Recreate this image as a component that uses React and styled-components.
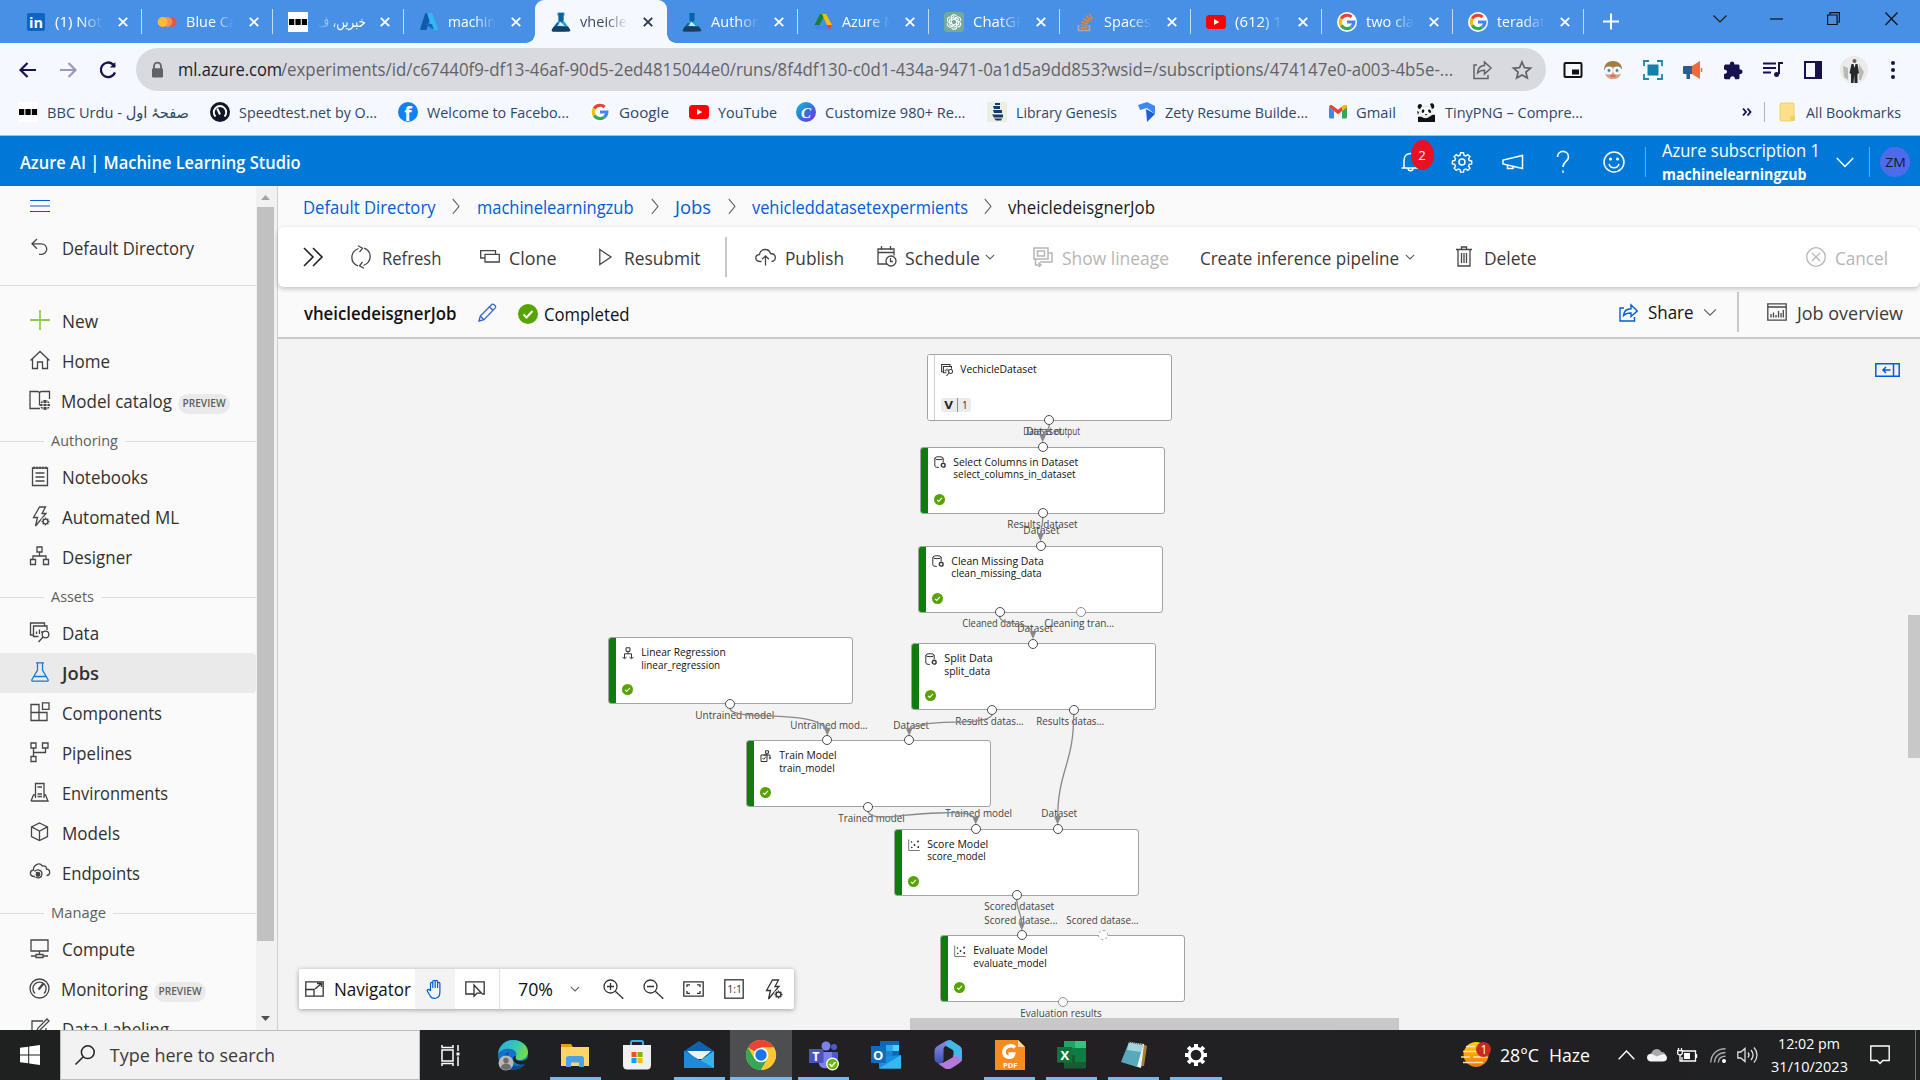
import React, { useLayoutEffect, useRef, useState } from "react";
import styled, { createGlobalStyle, css } from "styled-components";

const GlobalStyle = createGlobalStyle`
  * { box-sizing: border-box; }
  html, body { margin: 0; padding: 0; overflow: hidden; }
  body {
    font-family: "Open Sans", "Noto Sans", "DejaVu Sans", sans-serif;
    color: #323130;
    background: #f3f3f3;
  }
  svg { display: block; flex: none; overflow: visible; }
`;

/* ---------- text that keeps to a known width ---------- */
const TextBox = styled.span`
  display: inline-block;
  flex: none;
  white-space: nowrap;
  font-size: ${(p) => p.$size}px;
  font-weight: ${(p) => p.$weight || 400};
  line-height: ${(p) => p.$lh || Math.round(p.$size * 1.36)}px;
  color: ${(p) => p.$color || "inherit"};
  margin-left: ${(p) => p.$ml || 0}px;
  ${(p) => p.$dy && css`position: relative; top: ${p.$dy}px;`}
`;
const TextInner = styled.span`
  display: inline-block;
  transform-origin: 0 50%;
  text-indent: 0;
`;

function Text({ w, size = 17.5, weight, color, ml, dy, lh, children }) {
  const ref = useRef(null);
  const [scale, setScale] = useState(1);
  const bearing = size * 0.06;
  useLayoutEffect(() => {
    const el = ref.current;
    el.style.transform = "none";
    const natural = el.getBoundingClientRect().width;
    const next = natural ? (w + bearing * 2) / natural : 1;
    el.style.transform = `translateX(${-bearing}px) scaleX(${next})`;
    setScale(next);
  }, [w, children, bearing]);
  return (
    <TextBox $size={size} $weight={weight} $color={color} $ml={ml} $dy={dy} $lh={lh} style={{ width: w }}>
      <TextInner ref={ref} style={{ transform: `translateX(${-bearing}px) scaleX(${scale})` }}>{children}</TextInner>
    </TextBox>
  );
}

const IconSlot = styled.span`
  display: flex;
  flex: none;
  align-items: center;
  justify-content: center;
  width: ${(p) => p.$w}px;
  height: ${(p) => p.$h || p.$w}px;
  margin-left: ${(p) => p.$ml || 0}px;
`;

function Icon({ w = 20, h, ml, vb, color = "#484644", sw = 1.3, fill = "none", children }) {
  const hh = h || w;
  return (
    <IconSlot $w={w} $h={hh} $ml={ml}>
      <svg width={w} height={hh} viewBox={vb || `0 0 ${w} ${hh}`} fill={fill} stroke={color} strokeWidth={sw} preserveAspectRatio="none">
        {children}
      </svg>
    </IconSlot>
  );
}

/* ---------- brand marks ---------- */
const G = (
  <g fill="none" strokeWidth="3.2">
    <path stroke="#ea4335" d="M4.2 6.6A6.8 6.8 0 0 1 14.6 5" />
    <path stroke="#fbbc05" d="M4.2 13.4a6.8 6.8 0 0 1 0-6.8" />
    <path stroke="#34a853" d="M14.2 15.2A6.8 6.8 0 0 1 4.2 13.4" />
    <path stroke="#4285f4" d="M10 10h6.9a6.8 6.8 0 0 1-2.7 5.2" />
  </g>
);
const marks = {
  linkedin: (<><rect width="18" height="18" x="1" y="1" rx="2" fill="#0a66c2" /><text x="3" y="16" fontSize="14.5" fontWeight="700" fill="#fff">in</text></>),
  monday: (<><circle cx="14.6" cy="10" r="5" fill="#e8554d" /><circle cx="10.3" cy="10" r="5" fill="#f58f55" /><circle cx="5.7" cy="10" r="5" fill="#fdb93a" /></>),
  bbc: (<><rect width="20" height="20" fill="#fff" /><path fill="#000" d="M1 7h5.3v6H1zM7.4 7h5.3v6H7.4zM13.8 7h5.3v6h-5.3z" /></>),
  azure: (<><path fill="#0f5ba8" d="M7 1h6L7.500 18H2.200a1 1 0 0 1-1-1.300L6 2z" /><path fill="#35b8f1" d="M12.500 1H8l5.500 17h4.200a1 1 0 0 0 1-1.300L13.600 2z" /><path fill="#0a6cc9" d="M6 12h7l2 6z" /></>),
  flask: (<><path fill="#1fa2d8" d="M6.500 .5h7v3h-1v5L19 17.500c.7 1.300-.2 2-1.200 2H2.200c-1 0-1.900-.7-1.200-2L7.500 8.500v-5h-1z" /><path fill="#0c61a6" d="M7.500 1h5v7l-2 3-3-2.500zM1 17.500l5-7 4 3 4.500 6H2.200c-1 0-1.900-.7-1.200-2z" /><path fill="#173f63" d="M3 14.500h14l2 3c.7 1.300-.2 2-1.200 2H2.200c-1 0-1.900-.7-1.200-2z" /><path fill="#f5f8fe" d="M9.500 9.500L6.300 14h7.200z" opacity=".85" /></>),
  ads: (<><path fill="#188038" d="M7 2h5L6 14 1.500 13z" /><path fill="#fbbc04" d="M9 2h4l6 11h-5z" /><path fill="#4285f4" d="M1.500 13h5L9 18H3.500z" /><path fill="#4285f4" d="M6.500 13H14l2.500 5H3.500z" opacity=".75" /><path fill="#ea4335" d="M14 13h5l-2.500 5z" /></>),
  gpt: (<><rect width="20" height="20" rx="3.500" fill="#75a99b" /><g fill="none" stroke="#fff" strokeWidth="1.100">{[0, 60, 120, 180, 240, 300].map((a) => <path key={a} transform={`rotate(${a} 10 10)`} d="M7 8.300V5.600a3 3 0 0 1 5.300-1.800M7.400 8.400l4.500-2.600 3 1.700" />)}</g></>),
  stack: (<g fill="none" strokeWidth="1.700"><path stroke="#a9a9a9" d="M3.500 13v5.500h11V13" /><path stroke="#f48024" d="M5.500 15.800h7M5.700 13l7 .8M6.500 9.800l6.600 1.900M8.200 6.500l6 3.400M11 3.500l4.600 5M14.500 1.500l2.600 6" /></g>),
  yt: (<><rect y="3" width="20" height="14" rx="3.500" fill="#f00" /><path fill="#fff" d="M8 7l5.300 3L8 13z" /></>),
  google: (<><circle cx="10" cy="10" r="10" fill="#fff" />{G}</>),
  speed: (<><circle cx="10" cy="10" r="10" fill="#141526" /><path d="M5.500 14.500a6.200 6.200 0 1 1 9 0" fill="none" stroke="#fff" strokeWidth="1.900" /><path d="M10 12.500l-2.800-6" stroke="#fff" strokeWidth="2" /></>),
  fb: (<><circle cx="10" cy="10" r="10" fill="#0f82f5" /><text x="6.300" y="18.500" fontSize="19" fontWeight="700" fill="#fff">f</text></>),
  canva: (<><defs><linearGradient id="cv" x1="0" y1="0" x2="1" y2="1"><stop offset="0" stopColor="#10c4cb" /><stop offset=".5" stopColor="#3274dc" /><stop offset="1" stopColor="#7d2ae8" /></linearGradient></defs><circle cx="10" cy="10" r="10" fill="url(#cv)" /><text x="5" y="15.500" fontSize="15" fontStyle="italic" fontFamily="Liberation Serif" fontWeight="700" fill="#fff">C</text></>),
  libgen: (<><rect width="20" height="20" fill="#eceee0" /><path fill="#17396c" d="M8 1h5v2H8zM6 4h7v3H7zM6 8h9v3H7zM5 12.500h11v3H7zM7 16.500h8l-1 2H9z" /></>),
  zety: (<><path fill="#3f86f7" d="M0 3l9-3 8 4v8l-8-6-7 2z" /><path fill="#1c5fd6" d="M8 7l9 5-8 8z" /></>),
  gmail: (<><path fill="#4285f4" d="M0 5v10a1.500 1.500 0 0 0 1.500 1.500H5V9z" /><path fill="#34a853" d="M18 5v10a1.500 1.500 0 0 1-1.500 1.500H13V9z" /><path fill="#ea4335" d="M0 5c0-2 2-2.600 3.500-1.500L9 7.800l5.500-4.300C16 2.400 18 3 18 5l-9 7.200z" /><path fill="#fbbc04" d="M13 4.600V9l5-4c0-2-2-2.600-3.500-1.500z" /></>),
  panda: (<><path fill="#fff" stroke="#bbb" strokeWidth=".5" d="M4 8c0-5 12-5 12 0 0 3 0 6-6 7-4-1-6-3-6-7z" /><path fill="#111" d="M2 3c2-2 4-1 4 1L4 7C2 7 1 5 2 3zM14 2c3-2 5 1 4 4l-2 1zM6 8c2-1 3 0 2 2s-3 1-2-2zM12 8c2-1 3 0 3 2s-3 1-3-2zM8.500 12h3l-1.500 1.500zM2 15c3-2 5 2 9 1s4-4 8-3v7H2zM1 9l2 1-1 3z" /></>),
  folder: (<><path fill="#ffe08a" stroke="#e9c75e" strokeWidth=".8" d="M1 2.500C1 1.500 1.500 1 2.500 1h11c1 0 1.500.5 1.500 1.500V17l-3 2H2.500C1.500 19 1 18.500 1 17.500z" /><path fill="#f2cf62" d="M11.500 14H16v3.500c0 1-1 1.500-2 1.500h-2.500z" /></>),
};
function Mark({ name, w = 20, ml }) {
  return (
    <IconSlot $w={w} $h={20} $ml={ml}>
      <svg width={w} height="20" viewBox={`0 0 ${w} 20`}>{marks[name]}</svg>
    </IconSlot>
  );
}

/* ---------- browser chrome ---------- */
const Screen = styled.div`
  width: 1920px;
  height: 1080px;
  display: flex;
  flex-direction: column;
  overflow: hidden;
`;
const TabStrip = styled.div`
  height: 43px;
  flex: none;
  display: flex;
  background: #4790e6;
  padding-left: 11px;
`;
const Tab = styled.div`
  width: ${(p) => (p.$active ? 132 : 131)}px;
  height: 43px;
  flex: none;
  display: flex;
  align-items: center;
  padding-left: ${(p) => (p.$active ? 15.5 : 14.5)}px;
  color: ${(p) => (p.$active ? "#3d4b66" : "#fff")};
  background: ${(p) => (p.$active ? "#f5f8fe" : "transparent")};
  border-radius: 9px 9px 0 0;
  position: relative;
  ${(p) => p.$active && css`
    &::before, &::after {
      content: "";
      position: absolute;
      bottom: 0;
      width: 9px;
      height: 9px;
    }
    &::before { left: -9px; background: radial-gradient(circle at 0 0, transparent 8.500px, #f5f8fe 9px); }
    &::after { right: -9px; background: radial-gradient(circle at 100% 0, transparent 8.500px, #f5f8fe 9px); }
  `}
`;
const TabTitle = styled.div`
  width: 48px;
  margin-left: 9px;
  overflow: hidden;
  display: flex;
  justify-content: ${(p) => (p.$rtl ? "flex-end" : "flex-start")};
  mask-image: linear-gradient(to ${(p) => (p.$rtl ? "left" : "right")}, #000 55%, transparent 100%);
`;
const TabEdge = styled.i`
  width: 1px;
  height: 25px;
  margin-left: auto;
  background: #c3dcf8;
`;
const NavRow = styled.div`
  height: 53px;
  flex: none;
  display: flex;
  align-items: center;
  background: #f5f8fe;
  padding-left: 17px;
`;
const Address = styled.div`
  width: 1410px;
  height: 43px;
  margin-left: 17px;
  border-radius: 22px;
  background: #d9dae0;
  display: flex;
  align-items: center;
  padding-left: 13px;
`;
const BookmarkBar = styled.div`
  height: 40px;
  flex: none;
  display: flex;
  align-items: center;
  background: #f5f8fe;
  border-bottom: 1px solid #a9bdd6;
  padding: 0 0 7px 18px;
  color: #2f4766;
`;
const Bookmark = styled.div`
  display: flex;
  align-items: center;
  gap: 10px;
  margin-right: ${(p) => p.$gap}px;
`;
const Rule = styled.i`
  flex: none;
  width: ${(p) => p.$w || 1}px;
  height: ${(p) => p.$h}px;
  background: ${(p) => p.$c};
  margin-left: ${(p) => p.$ml || 0}px;
`;

const tabs = [
  ["linkedin", "(1) Not", 45], ["monday", "Blue Ca", 49], ["bbc", "خبریں، ف", 47], ["azure", "machin", 46],
  ["flask", "vheicle", 45, true], ["flask", "Author", 45], ["ads", "Azure M", 53], ["gpt", "ChatGP", 50],
  ["stack", "Spaces", 45], ["yt", "(612) 1", 45], ["google", "two cla", 46], ["google", "teradat", 46],
];
const bookmarks = [
  ["bbc", "BBC Urdu - صفحۂ اول", 140], ["speed", "Speedtest.net by O...", 136], ["fb", "Welcome to Facebo...", 140],
  ["google", "Google", 48, 21], ["yt", "YouTube", 57, 20], ["canva", "Customize 980+ Re...", 138.5], ["libgen", "Library Genesis", 99],
  ["zety", "Zety Resume Builde...", 141], ["gmail", "Gmail", 38, 21], ["panda", "TinyPNG – Compre...", 136],
];

function Browser() {
  return (
    <>
      <TabStrip>
        {tabs.map(([icon, label, w, active], i) => (
          <Tab key={i} $active={active}>
            <Mark name={icon} />
            <TabTitle $rtl={icon === "bbc"}><Text w={w} size={15.3} ml={1}>{label}</Text></TabTitle>
            <Icon w={10} ml={15} color={active ? "#2c3a52" : "#fff"} sw={1.9}><path d="M.8.8l8.400 8.400M9.200.8L.8 9.200" /></Icon>
            {i !== 3 && !active && <TabEdge />}
          </Tab>
        ))}
        <Icon w={16} h={43} ml={19} color="#fff" sw={2}><path d="M8 13.500v16M0 21.500h16" /></Icon>
        <Icon w={14} h={38} ml={94} color="#1a1a1a" sw={1.2}><path d="M.5 15.500l6.500 6.500 6.500-6.500" /></Icon>
        <Icon w={13} h={38} ml={43} color="#111" sw={1.2}><path d="M0 19h13" /></Icon>
        <Icon w={13} h={38} ml={44} color="#111" sw={1.2}><path d="M.6 15h9.500v9.500H.6zM3 15v-2.400h9.400V22H10" /></Icon>
        <Icon w={13} h={38} ml={45} color="#111" sw={1.2}><path d="M.5 12.500l12 12.500M12.500 12.500l-12 12.500" /></Icon>
      </TabStrip>
      <NavRow>
        <Icon w={22} color="#17124e" sw={2.2}><path d="M19 11H4M10.500 4L3.500 11l7 7" /></Icon>
        <Icon w={22} ml={18} color="#9c98bd" sw={2.2}><path d="M3 11h15M11.500 4l7 7-7 7" /></Icon>
        <Icon w={22} ml={18} color="#17124e" sw={2.3}><path d="M18 13.500A7.300 7.300 0 1 1 16 5.300L18 7.500" /><path fill="#17124e" d="M18.300 3v5.500h-5.500z" stroke="none" /></Icon>
        <Address>
          <Icon w={17} h={18} color="#5f6368" sw={1.8}><path d="M5 8V5.200a3.500 3.500 0 0 1 7 0V8" /><rect x="3" y="7.300" width="11" height="9.200" rx="1.200" fill="#5f6368" stroke="none" /></Icon>
          <Text w={102} size={18} ml={13} dy={-0.5} color="#202124">ml.azure.com</Text>
          <Text w={1170} size={18} ml={1} dy={-0.5} color="#5f6368">/experiments/id/c67440f9-df13-46af-90d5-2ed4815044e0/runs/8f4df130-c0d1-434a-9471-0a1d5a9dd853?wsid=/subscriptions/474147e0-a003-4b5e-...</Text>
          <Icon w={20} ml={20} color="#5f6368" sw={1.5}><path d="M5 5H2v13.500h14V15M5.500 13c.5-5 3-7.500 7-7.500V2l6.500 6-6.500 6v-3.700c-3 0-5 .7-7 2.700z" /></Icon>
          <Icon w={20} ml={20} color="#5f6368" sw={1.7}><path d="M10 2l2.400 5.600 6.100.5-4.600 4 1.400 6L10 14.900 4.700 18.100l1.400-6-4.600-4 6.100-.5z" /></Icon>
        </Address>
        <Icon w={20} ml={17} color="#111" sw={2}><rect x="1.500" y="3" width="17" height="14" rx="1" /><path fill="#111" stroke="none" d="M9 9.500h7v5H9z" /></Icon>
        <IconSlot $w={20} $ml={20}><svg width="20" height="20"><path fill="#a07f45" d="M1 10C1 4 5 1 10 1s9 3 9 8z" /><path fill="#dfa080" d="M2.500 9C4 6 16 6 17.500 9v4c0 4-3 6-7.500 6s-7.500-2-7.500-6z" /><g fill="#d9f1f5" stroke="#fff" strokeWidth="1.500"><circle cx="5.800" cy="10.500" r="3.300" /><circle cx="14.200" cy="10.500" r="3.300" /></g><circle cx="6" cy="10.500" r="1.300" fill="#36789a" /><circle cx="14" cy="10.500" r="1.300" fill="#36789a" /><path d="M7.500 16h5" stroke="#a34e43" /></svg></IconSlot>
        <Icon w={20} ml={20} color="#1c86b5" sw={1.8}><path d="M1 6V1h5M14 1h5v5M19 14v5h-5M6 19H1v-5" /><path fill="#1580a8" stroke="none" d="M4.500 4.500h11v11h-11z" /></Icon>
        <IconSlot $w={20} $ml={20}><svg width="20" height="20"><path fill="#2a5b92" d="M1 6h8v8H7v5H3.500v-5H1a1 1 0 0 1-1-1V7a1 1 0 0 1 1-1z" /><path fill="#ef6939" d="M9 6l8-5v18l-8-5z" /><path stroke="#ef6939" strokeWidth="1.500" d="M18.500 8v4" /></svg></IconSlot>
        <Icon w={20} ml={20} color="none" fill="#17124e"><path d="M1 6.500C1 5 2 4.500 3 4.500h4C6 1 11.500 0 11.500 4.500H15c1 0 1.500.5 1.500 1.500v3.200c4 0 4 5 0 5V18c0 .7-.5 1.200-1.200 1.200H12c0-4-5-4-5 0H2.500C1.500 19.200 1 18.700 1 18v-4c4 0 4-4.500 0-4.500z" /></Icon>
        <Icon w={20} ml={20} color="#17124e" sw={2}><path d="M0 3.500h13M0 8h13M0 12.500h8M16 14V3h4" /><circle cx="13.600" cy="14.500" r="2.500" fill="#17124e" stroke="none" /></Icon>
        <Icon w={20} ml={20} color="#17124e" sw={2}><rect x="2" y="2" width="16" height="16" /><path fill="#17124e" stroke="none" d="M12 2h6v16h-6z" /></Icon>
        <IconSlot $w={28} $ml={17}><svg width="28" height="28"><circle cx="14" cy="14" r="14" fill="#ebebea" /><path fill="#b9b9b6" d="M3 10l5 2v12l-4-3zM19 8l5 8-3 8h-2z" /><circle cx="14.500" cy="5" r="2" fill="#675f58" /><path fill="#25272b" d="M11.500 8h6l1.500 9-1.500 1v9h-3l-.3-8-.7 8h-2.500L11 18l-1.500-1z" /><path fill="#fff" d="M13.500 8h2l-1 4z" /></svg></IconSlot>
        <Icon w={20} ml={14.5} color="none" fill="#17124e"><circle cx="10" cy="3" r="2" /><circle cx="10" cy="10" r="2" /><circle cx="10" cy="17" r="2" /></Icon>
      </NavRow>
      <BookmarkBar>
        {bookmarks.map(([icon, label, w, gap = 22]) => (
          <Bookmark key={label} $gap={gap}><Mark name={icon} w={icon === "zety" || icon === "gmail" ? 18 : 20} /><Text w={w} size={15.3}>{label}</Text></Bookmark>
        ))}
        <Icon w={10} ml={138} color="#17124e" sw={1.9}><path d="M1 1.500L4 5 1 8.500M5.500 1.500L8.500 5l-3 3.500" /></Icon>
        <Rule $w={1} $h={20} $c="#a9b3c6" $ml={12} />
        <Mark name="folder" w={16} ml={14} />
        <Text w={93} size={15.3} ml={12}>All Bookmarks</Text>
      </BookmarkBar>
    </>
  );
}

/* ---------- studio header ---------- */
const Header = styled.header`
  height: 50px;
  flex: none;
  display: flex;
  align-items: center;
  background: #0078d7;
  color: #fff;
  padding: 1px 0 0 21px;
`;
const HeaderTools = styled.div`
  display: flex;
  align-items: center;
  margin-left: auto;
`;
const Bell = styled.div`
  position: relative;
  width: 22px;
`;
const Badge = styled.span`
  position: absolute;
  left: 11px;
  top: -11px;
  width: 23px;
  height: 30px;
  border-radius: 50%;
  background: #e81123;
  display: flex;
  align-items: center;
  justify-content: center;
  font-size: 13px;
`;
const Account = styled.div`
  display: flex;
  flex-direction: column;
  width: 156px;
  margin-left: 17px;
`;
const Avatar = styled.div`
  width: 30px;
  height: 30px;
  margin: 0 10px 0 10px;
  border-radius: 50%;
  background: #4f6bed;
  color: #17172b;
  display: flex;
  align-items: center;
  justify-content: center;
`;

function StudioHeader() {
  return (
    <Header>
      <Text w={278.5} size={17.8} weight={600}>Azure AI | Machine Learning Studio</Text>
      <HeaderTools>
        <Bell>
          <Icon w={22} color="#fff" sw={1.5}><path d="M1.500 17h18M4 17V9.500C4 5 7 2.500 10.500 2.500S17 5 17 9.500V17M8 17c0 3.500 5 3.500 5 0" /></Icon>
          <Badge>2</Badge>
        </Bell>
        <Icon w={22} ml={29} color="#fff" sw={1.5}>
          <circle cx="11" cy="11" r="3" /><path d="M9.400 1.500h3.200l.5 2.600 1.900.8 2.200-1.500 2.300 2.300-1.500 2.200.8 1.900 2.600.5v3.200l-2.600.5-.8 1.900 1.500 2.200-2.300 2.300-2.200-1.500-1.900.8-.5 2.600H9.400l-.5-2.600-1.900-.8-2.200 1.500-2.300-2.300L4 15.900 3.200 14l-2.600-.5v-3.200l2.600-.5L4 7.900 2.500 5.700l2.300-2.300L7 4.900l1.900-.8z" transform="translate(.8 .4) scale(.93)" />
        </Icon>
        <Icon w={22} ml={29} color="#fff" sw={1.5}><path d="M20.500 4.500v13L1 13V9zM5.500 14v3.500h5.500v-2" /></Icon>
        <Icon w={22} h={24} ml={28} color="#fff" sw={1.6}><path d="M5.500 7c0-7.500 11-7.500 11 0 0 4.500-5.500 4.500-5.500 10M11 20.500v2.200" /></Icon>
        <Icon w={22} ml={29} color="#fff" sw={1.5}><circle cx="11" cy="11" r="10" /><path d="M6 13c1.500 5 8.500 5 10 0" /><circle cx="7.500" cy="8" r=".8" fill="#fff" /><circle cx="14.500" cy="8" r=".8" fill="#fff" /></Icon>
        <Rule $h={30} $c="#63acea" $ml={20.5} />
        <Account>
          <Text w={156} size={18} lh={24}>Azure subscription 1</Text>
          <Text w={142.5} size={16.3} weight={700} lh={24}>machinelearningzub</Text>
        </Account>
        <Icon w={18} ml={17} color="#fff" sw={1.5}><path d="M.8 5L9 13.500 17.200 5" /></Icon>
        <Rule $h={30} $c="#63acea" $ml={15} />
        <Avatar><Text w={19} size={13}>ZM</Text></Avatar>
      </HeaderTools>
    </Header>
  );
}

/* ---------- sidebar ---------- */
const Body = styled.div`
  flex: 1;
  min-height: 0;
  display: flex;
`;
const Sidebar = styled.nav`
  width: 256px;
  flex: none;
  height: 844px;
  overflow: hidden;
  background: #fafafa;
`;
const MenuToggle = styled.div`
  height: 38px;
  padding: 10px 0 0 30px;
`;
const SideRow = styled.div`
  height: ${(p) => p.$h || 40}px;
  display: flex;
  align-items: center;
  padding: 0 0 2px 29px;
  background: ${(p) => (p.$active ? "#eaeaea" : "transparent")};
  border-radius: 0 4px 4px 0;
`;
const SideDivider = styled.div`
  height: 16px;
  margin-top: 13px;
  border-top: 1px solid #dcdcdc;
`;
const SideSection = styled.div`
  height: 36px;
  display: flex;
  align-items: center;
  gap: 8px;
  padding-top: 5px;
  &::before { content: ""; width: 44px; height: 1px; background: #dcdcdc; }
  &::after { content: ""; flex: 1; height: 1px; background: #dcdcdc; }
`;
const Pill = styled.span`
  width: 52px;
  height: 20px;
  margin: 7px 0 0 7px;
  border-radius: 10px;
  background: #eaeaea;
  display: flex;
  align-items: center;
  justify-content: center;
`;
const SideScroll = styled.div`
  width: 22px;
  flex: none;
  display: flex;
  flex-direction: column;
  align-items: center;
  background: #f1f1f1;
  border-right: 1px solid #cfcfcf;
  padding: 9px 2px 0 0;
`;
const SideThumb = styled.div`
  width: 17px;
  height: 734px;
  margin: 7px 0 75px;
  background: #c1c1c1;
`;

const automl = <><path d="M8.500 1h6l-3.500 6.500h4L4.500 20l2-8.500H2.500z" /><circle cx="14.500" cy="15.500" r="4.600" fill="#fafafa" stroke="none" /><circle cx="14.500" cy="15.500" r="2.400" /><path d="M14.500 11.500v1.500M14.500 18v1.500M10.500 15.500H12M17 15.500h1.500M11.700 12.700l1 1M16.300 17.300l1 1M17.300 12.700l-1 1M12.700 17.300l-1 1" /></>;
const dataIcon = <><path d="M3.500 13H1V1h14v2.500M9 14.500H4V4h13.500v4M7 12V9.500M10 12V7.500M12.500 11V9" /><circle cx="16" cy="12.500" r="3.300" /><path d="M13.500 15l-4.500 5" /></>;
const sideIcons = {
  back: <path d="M7.500 1L2.500 5.800l5 5M2.500 5.800H12a5 5 0 0 1 0 10.500H9.500" transform="translate(.5 1)" />,
  plus: <path stroke="#92cc4f" strokeWidth="1.800" d="M11 0v20M1 10h20" />,
  home: <path d="M1.500 10.500L11 1.500l9.500 9M3.500 9v9.500h5V12h5v6.500h5V9" />,
  catalog: <><path d="M11 18.500H1V1.500h7.500c1.500 0 2 1 2 2v12M10.500 3.500c0-1 .7-2 2-2H20.500V9" /><circle cx="16" cy="15" r="5" fill="#484644" stroke="none" /><path stroke="#fafafa" strokeWidth=".9" d="M11 13.500h10M11 16.500h10M14 10.500v9M18 10.500v9" /></>,
  notebook: <path d="M3.500 2h15v17.500h-15zM6.500 7h9M6.500 11h9M6.500 15h9M5 .5V3M8 .5V3M11 .5V3M14 .5V3M17 .5V3" />,
  automl: <g transform="translate(2)">{automl}</g>,
  designer: <path d="M8 1h5v5H8zM1.500 13.500h5v5h-5zM14.500 13.500h5v5h-5zM10.500 6v4M4 13.500V10h13v3.500" />,
  data: <g transform="translate(.5)">{dataIcon}</g>,
  jobs: <g stroke="#1d77cc"><path d="M7 .8h8M8.500 1v7L3 17.500c-.5 1.200 0 1.700 1 1.700h14c1 0 1.500-.5 1-1.700L13.500 8V1M5 14.500h12" /></g>,
  components: <path d="M2 2.500h8v16H2zM2 10.500h16v8H10v-8M13.500 .8h6.500v6.500h-6.500z" />,
  pipelines: <path d="M2 1h5v5H2zM13.500 1h5.500v5h-5.500zM2 14.500h5v5H2zM4.500 6v8.500M4.500 10.500h12V6" />,
  environments: <path d="M6.500 16V1.500h8.500V16M2 19h17l-2.500-6H15M2 19l2.500-6h2M3 19h15M8.500 5h4.500M8.500 12h4.500M8.500 14.500h4.500" />,
  models: <path d="M10.500 1l8 3.800v9.700l-8 4-8-4V4.800zM2.500 4.800l8 4.200 8-4.200M10.500 9v9.500" />,
  endpoints: <><path d="M6 14.500H4.500C.5 14 .2 8.500 4.500 8 4 3.500 10-.5 13.500 4c3-.5 4 1 4 3 4.500.5 4 6.500 0 6.500" /><path d="M5.500 9.500c2-2.500 7.500-2 7.500 2.500 0 3.500-4 5-6.500 3M7 11c1-1 3.500-.8 3.500 1.200" /><circle cx="9" cy="12.500" r="1.800" fill="#484644" /></>,
  compute: <path d="M2 2h17v11H2zM10.500 13v3M2 18h5M14 18h5M7 16.500h7v3H7z" />,
  monitoring: <><circle cx="10.500" cy="10.500" r="9.500" /><path d="M6 15.500A6.600 6.600 0 1 1 15 15.500" /><path d="M9.500 11.500l5-6" strokeWidth="2.200" /></>,
  labeling: <path d="M17 10v9H3V3h11M7 15l2-5 9-9 2 2-9 9z" />,
};
function SideIcon({ name }) {
  return <Icon w={22} h={20} vb="0 0 22 20">{sideIcons[name]}</Icon>;
}
function SideItem({ icon, w, preview, active, children }) {
  return (
    <SideRow $active={active}>
      <SideIcon name={icon} />
      <Text w={w} ml={preview ? 11 : 12} weight={active ? 600 : 400} dy={1} color="#323130">{children}</Text>
      {preview && <Pill><Text w={42} size={9.8} weight={600} color="#605e5c">PREVIEW</Text></Pill>}
    </SideRow>
  );
}
function SideHeading({ w, children }) {
  return <SideSection><Text w={w} size={15.3} dy={-1.5} color="#605e5c">{children}</Text></SideSection>;
}
function Side() {
  return (
    <>
      <Sidebar>
        <MenuToggle>
          <Icon w={20} h={20} color="#015cda" sw={1.2}><path d="M0 4.500h20M0 10h20M0 15.500h20" /></Icon>
        </MenuToggle>
        <SideRow $h={48}><SideIcon name="back" /><Text w={130} ml={12} dy={1}>Default Directory</Text></SideRow>
        <SideDivider />
        <SideItem icon="plus" w={34}>New</SideItem>
        <SideItem icon="home" w={46}>Home</SideItem>
        <SideItem icon="catalog" w={109} preview>Model catalog</SideItem>
        <SideHeading w={65}>Authoring</SideHeading>
        <SideItem icon="notebook" w={84}>Notebooks</SideItem>
        <SideItem icon="automl" w={115}>Automated ML</SideItem>
        <SideItem icon="designer" w={68}>Designer</SideItem>
        <SideHeading w={41}>Assets</SideHeading>
        <SideItem icon="data" w={35}>Data</SideItem>
        <SideItem icon="jobs" w={35} active>Jobs</SideItem>
        <SideItem icon="components" w={98}>Components</SideItem>
        <SideItem icon="pipelines" w={68}>Pipelines</SideItem>
        <SideItem icon="environments" w={104}>Environments</SideItem>
        <SideItem icon="models" w={56}>Models</SideItem>
        <SideItem icon="endpoints" w={76}>Endpoints</SideItem>
        <SideHeading w={53}>Manage</SideHeading>
        <SideItem icon="compute" w={71}>Compute</SideItem>
        <SideItem icon="monitoring" w={85} preview>Monitoring</SideItem>
        <SideItem icon="labeling" w={105}>Data Labeling</SideItem>
      </Sidebar>
      <SideScroll>
        <Icon w={9} h={5} color="none" fill="#a3a3a3"><path d="M0 5L4.500 0 9 5z" /></Icon>
        <SideThumb />
        <Icon w={9} h={5} color="none" fill="#505050"><path d="M0 0h9L4.500 5z" /></Icon>
      </SideScroll>
    </>
  );
}

/* ---------- main column ---------- */
const Main = styled.main`
  flex: 1;
  min-width: 0;
  display: flex;
  flex-direction: column;
  background: #fafafa;
`;
const Crumbs = styled.div`
  height: 41px;
  flex: none;
  display: flex;
  align-items: center;
  padding-left: 26px;
  color: #015cda;
`;
const CommandBar = styled.div`
  height: 60px;
  flex: none;
  display: flex;
  align-items: center;
  padding-left: 25px;
  background: #fff;
  border-radius: 6px;
  box-shadow: 0 2px 5px rgba(0, 0, 0, 0.22);
  color: #3b3a39;
  z-index: 1;
`;
const TitleBar = styled.div`
  height: 52px;
  flex: none;
  display: flex;
  align-items: center;
  padding-left: 26.500px;
  border-bottom: 2px solid #c8c8c8;
  color: #111;
`;
const Push = styled.div`
  flex: 1;
`;
const CheckDot = ({ size, ml }) => (
  <IconSlot $w={size} $ml={ml}>
    <svg width={size} height={size} viewBox="0 0 20 20"><circle cx="10" cy="10" r="10" fill="#57a300" /><path d="M5.500 10.500l3 3 6-6.500" fill="none" stroke="#fff" strokeWidth="2" /></svg>
  </IconSlot>
);
const StatusText = styled.div`
  display: flex;
  align-items: center;
  padding-top: 3px;
`;
function Crumb({ w, ml, color, children }) {
  return <Text w={w} ml={ml} color={color} dy={0.5}>{children}</Text>;
}
function CrumbArrow({ ml }) {
  return <Icon w={8} h={16} vb="0 0 8 14" ml={ml} color="#605e5c" sw={1}><path d="M.8 0L7 6.500 .8 13" /></Icon>;
}
function Command({ w, ml, color, children }) {
  return <Text w={w} weight={500} ml={ml} color={color} dy={1}>{children}</Text>;
}
const Caret = ({ w = 10, ml }) => <Icon w={w} h={w === 10 ? 8 : 11} vb="0 0 10 8" ml={ml} color="#605e5c" sw={w === 10 ? 1.1 : 0.8}><path d="M.8 1.800L5 6 9.200 1.800" /></Icon>;

function MainBars() {
  return (
    <>
      <Crumbs>
        <Crumb w={130.5}>Default Directory</Crumb><CrumbArrow ml={17.5} />
        <Crumb w={154.5} ml={18}>machinelearningzub</Crumb><CrumbArrow ml={18} />
        <Crumb w={34} ml={17}>Jobs</Crumb><CrumbArrow ml={18} />
        <Crumb w={214} ml={17}>vehicleddatasetexpermients</Crumb><CrumbArrow ml={17.5} />
        <Crumb w={145} ml={17} color="#1b1a19">vheicledeisgnerJob</Crumb>
      </Crumbs>
      <CommandBar>
        <Icon w={20} color="#222" sw={1.6}><path d="M1 1l9 9-9 9M10 1l9 9-9 9" /></Icon>
        <Icon w={20} h={24} ml={28}><path d="M7.500 3.500C-1.500 7-1 18 7 20.800M12.500 20.500c9-3.500 8.500-14.500.5-17.300M7 .8l4.500 2.400-3 4M13 23.200l-4.500-2.400 3-4" /></Icon>
        <Command w={57.5} ml={11.5}>Refresh</Command>
        <Icon w={20} h={18} ml={39.5}><path d="M4.500 10H.7V2.700H15.500V6M5 6.300h14.300V14H5z" /></Icon>
        <Command w={45.5} ml={10}>Clone</Command>
        <Icon w={13} h={18} ml={44}><path d="M.8 1.500L12 9 .8 16.500z" /></Icon>
        <Command w={74.5} ml={13}>Resubmit</Command>
        <Rule $w={2} $h={40} $c="#c8c8c8" $ml={25} />
        <Icon w={21} h={18} ml={28}><path d="M6.500 13.500H5C-.5 13-.5 7 4.500 6.500 5.500 0 14 0 15.500 5.500c6 0 6.500 7.500 1 8M10.500 17.500V8M7 11.300L10.500 8l3.500 3.300" /></Icon>
        <Command w={57} ml={10}>Publish</Command>
        <Icon w={20} h={22} ml={34.5}><path d="M10 18H1V3h16v6.500M1 6.500h16M4.500 0v4M13.500 0v4" /><circle cx="14" cy="15" r="5" /><path d="M13.500 12v3.500H16" /></Icon>
        <Command w={73} ml={9}>Schedule</Command><Caret ml={5.5} />
        <Icon w={20} ml={38} color="#b8b6b4" sw={1.5}><path d="M1 1h14v11H1zM4.500 4h7v5h-7zM15 6h4v9H7M2.500 12v6h5M5.500 15.500L8 18l-2.500 2" /></Icon>
        <Command w={105} ml={10} color="#b8b6b4">Show lineage</Command>
        <Command w={197} ml={33}>Create inference pipeline</Command><Caret ml={7} />
        <Icon w={16} h={22} ml={41}><path d="M0 3.500h16M5.500 3.500V1h5v2.500M2 3.500v16.500h12V3.500M5.500 7v10M8 7v10M10.500 7v10" /></Icon>
        <Command w={50.5} ml={13}>Delete</Command>
        <Push />
        <Icon w={20} color="#b8b6b4"><circle cx="10" cy="10" r="9.300" /><path d="M6 6l8 8M14 6l-8 8" /></Icon>
        <Command w={51} ml={10} color="#b8b6b4">Cancel</Command>
        <Rule $h={1} $w={33.5} $c="transparent" />
      </CommandBar>
      <TitleBar>
        <Text w={150.5} weight={600} dy={1}>vheicledeisgnerJob</Text>
        <Icon w={19} ml={23} color="#2f64d0" sw={1.3}><path d="M1 18l1.300-5L14 1.300c1-1 4.500 2 3.500 3.300L6 16.700zM11.500 3.800l3.700 3.700M2.300 13L6 16.700" /></Icon>
        <StatusText>
          <CheckDot size={20} ml={21} />
          <Text w={83.5} ml={7}>Completed</Text>
        </StatusText>
        <Push />
        <Icon w={19} color="#015cda" sw={1.4}><path d="M5 5H1v13h14.500v-4M4.500 12.500C5 8 8 5.800 12 5.800V2L18.300 8 12 13.500V10c-3 0-5.500.5-7.500 2.500z" /></Icon>
        <Text w={43.5} ml={11.5}>Share</Text>
        <Caret w={14} ml={10} />
        <Rule $w={2} $h={40} $c="#c8c8c8" $ml={20} />
        <Icon w={20} h={18} ml={28}><path d="M.8.8h18.400v16.400H.8zM.8 4h18.400M4 14.500V11M6.500 14.500V9.500M9 14.500V12M11.500 14.500V8M14 14.500V10M16.300 14.500V7" /></Icon>
        <Text w={104} weight={500} ml={11} dy={1} color="#3b3a39">Job overview</Text>
        <Rule $h={1} $w={18.5} $c="transparent" />
      </TitleBar>
    </>
  );
}

/* ---------- pipeline graph ---------- */
const Canvas = styled.section`
  position: relative;
  flex: 1;
  background: #f3f3f3;
  overflow: hidden;
`;
const EdgeLayer = styled.svg`
  position: absolute;
  left: 0;
  top: 0;
  pointer-events: none;
`;
const NodeBox = styled.article`
  position: absolute;
  left: ${(p) => p.$x}px;
  top: ${(p) => p.$y}px;
  width: 245px;
  height: 67px;
  display: flex;
  background: #fff;
  border: 1px solid #a3a3a3;
  border-radius: 3px;
  overflow: hidden;
`;
const Status = styled.div`
  width: 7px;
  flex: none;
  background: ${(p) => (p.$done ? "#107c10" : "#fff")};
  border-right: ${(p) => (p.$done ? "none" : "1px solid #d0d0d0")};
`;
const NodeIcons = styled.div`
  width: 12px;
  margin-left: 5.500px;
  padding: 8.500px 0 8px;
  display: flex;
  flex-direction: column;
  justify-content: space-between;
`;
const NodeText = styled.div`
  margin-left: 8px;
  padding-top: ${(p) => (p.$low ? 7 : 6)}px;
  display: flex;
  flex-direction: column;
  color: #111;
`;
const Version = styled.div`
  display: flex;
  align-items: center;
  width: 30px;
  height: 14px;
  padding-left: 4px;
  border-radius: 3px;
  background: #ebebeb;
  color: #222;
`;
const PortLabel = styled.div`
  position: absolute;
  left: ${(p) => p.$x}px;
  top: ${(p) => p.$y}px;
  display: flex;
`;
const Port = styled.span`
  position: absolute;
  left: ${(p) => p.$x - 5}px;
  top: ${(p) => p.$y - 5}px;
  width: 10px;
  height: 10px;
  border-radius: 50%;
  background: #fff;
  border: 1.300px ${(p) => (p.$kind === "optional" ? "dashed #a8a8a8" : p.$kind === "idle" ? "solid #8f8f8f" : "solid #4c4c4c")};
`;
const PanelToggle = styled.div`
  position: absolute;
  right: 20px;
  top: 24px;
`;
const ScrollBarY = styled.div`
  position: absolute;
  right: 0;
  top: 276px;
  width: 12px;
  height: 143px;
  background: #c8c8c8;
`;
const ScrollBarX = styled.div`
  position: absolute;
  left: 632px;
  bottom: 0;
  width: 489px;
  height: 12px;
  background: #c8c8c8;
`;

const OX = 278;
const OY = 339;
const nodeIcons = {
  data: <g transform="scale(.6)" strokeWidth="1.700">{dataIcon}</g>,
  db: <><ellipse cx="5" cy="2.200" rx="4.200" ry="1.500" /><path d="M.8 2.200V10c0 .8 1.500 1.400 4 1.500M9.200 2.200v4" /><circle cx="9.200" cy="9.200" r="1.900" strokeWidth="1.400" /></>,
  tree: <path d="M4 .8h4v3.500H4zM6 4.300v2.500M2.500 11V6.800h7V11M.5 10.200l2 1.500 2-1.500M7.500 10.200l2 1.500 2-1.500" />,
  train: <><path d="M1 5h6v6.500H1zM2.500 8l1.300 1.300L6 6.500M5.500.8h3v2.500h-3zM7 3.300V5M3.500 5h6.500v3" /><path d="M8.500 7.500h3L10 9.500z" fill="#333" stroke="none" /></>,
  scatter: <><path d="M.7.5v11h11" stroke="#777" /><g fill="#222" stroke="none"><circle cx="3.500" cy="3" r=".8" /><circle cx="6.500" cy="6" r=".9" /><circle cx="10" cy="2.500" r=".9" /><circle cx="3.800" cy="8.500" r=".8" /><circle cx="10.300" cy="8" r=".9" /></g></>,
};
const nodes = [
  { x: 927, y: 354, icon: "data", title: "VechicleDataset", tw: 75 },
  { x: 920, y: 446.5, icon: "db", title: "Select Columns in Dataset", tw: 123.5, sub: "select_columns_in_dataset", sw: 121, done: true },
  { x: 918, y: 545.5, icon: "db", title: "Clean Missing Data", tw: 91, sub: "clean_missing_data", sw: 89, done: true },
  { x: 911, y: 643.3, icon: "db", title: "Split Data", tw: 47, sub: "split_data", sw: 44.5, done: true, low: true },
  { x: 608, y: 637.3, icon: "tree", title: "Linear Regression", tw: 83, sub: "linear_regression", sw: 77.5, done: true, low: true },
  { x: 746, y: 740.3, icon: "train", title: "Train Model", tw: 56, sub: "train_model", sw: 54, done: true, low: true },
  { x: 894, y: 829, icon: "scatter", title: "Score Model", tw: 59.5, sub: "score_model", sw: 57, done: true },
  { x: 940, y: 935.3, icon: "scatter", title: "Evaluate Model", tw: 73, sub: "evaluate_model", sw: 72, done: true, low: true },
];
const ports = [
  [1049.3, 420.3], [1042.7, 446.7], [1042.7, 513], [1040.5, 545.7], [999.7, 612], [1081.3, 612, "idle"],
  [1033, 643.5], [992.3, 710], [1073.7, 710], [730, 704], [827.3, 740.3], [909.2, 740.3], [868.2, 807],
  [975.7, 829], [1057.6, 829], [1016.8, 895], [1021.8, 935], [1103.2, 935, "optional"], [1062.5, 1001.5, "idle"],
];
const labels = [
  ["Dataset output", 1024.3, 430.3, 55.5], ["Dataset", 1026.5, 430.3, 34.5], ["Results dataset", 1008.3, 523, 69],
  ["Dataset", 1024.3, 529.3, 35], ["Cleaned datas...", 962.7, 622.3, 68], ["Cleaning tran...", 1044.7, 622.3, 68.5],
  ["Dataset", 1017.7, 627.3, 34.5], ["Results datas...", 955.5, 720, 67], ["Results datas...", 1037, 720, 66.5],
  ["Untrained model", 695.6, 714, 77.5], ["Untrained mod...", 791.3, 724.5, 76], ["Dataset", 893.5, 724.5, 34.5],
  ["Trained model", 839, 817, 65], ["Trained model", 946, 812, 65.3], ["Dataset", 1042, 812, 34.5],
  ["Scored dataset", 984.6, 905, 68.5], ["Scored datase...", 984.6, 919.3, 72], ["Scored datase...", 1067, 919.3, 71],
  ["Evaluation results", 1021.4, 1012, 80],
];
const edges = [
  "M1049.300 425C1049.300 432 1042.700 430 1042.700 437",
  "M1042.700 518C1042.700 528 1040.500 528 1040.500 536",
  "M999.700 617C1001 626 1030 620 1033 634",
  "M730 709C736 722 818 708 827.300 731",
  "M992.300 715C984 728 918 716 909.200 731",
  "M1073.700 715C1073.700 765 1057.600 770 1057.600 820",
  "M868.200 812C872 822 900 814 938 813C965 812 972 813 975.700 820",
  "M1016.800 900C1017 912 1021.800 912 1021.800 926",
];
const arrows = [[1042.7, 446.7], [1040.5, 545.7], [1033, 643.5], [827.3, 740.3], [909.2, 740.3], [975.7, 829], [1057.6, 829], [1021.8, 935]];

function GraphNode({ n }) {
  return (
    <NodeBox $x={n.x - OX} $y={n.y - OY}>
      <Status $done={n.done} />
      <NodeIcons>
        <Icon w={12} color="#333" sw={1}>{nodeIcons[n.icon]}</Icon>
        {n.done ? <CheckDot size={11} /> : (
          <Version>
            <Text w={7.5} size={10.5} weight={700}>V</Text><Rule $h={14} $c="#8a8a8a" $ml={4.5} /><Text w={4} size={10.5} ml={5}>1</Text>
          </Version>
        )}
      </NodeIcons>
      <NodeText $low={n.low}>
        <Text w={n.tw} size={11.6} lh={n.low ? 13 : 15} weight={500}>{n.title}</Text>
        {n.sub && <Text w={n.sw} size={11.3} lh={n.low ? 13 : 9}>{n.sub}</Text>}
      </NodeText>
    </NodeBox>
  );
}

/* ---------- floating canvas controls ---------- */
const CanvasTools = styled.div`
  position: absolute;
  left: 21px;
  top: 630px;
  width: 495px;
  height: 40px;
  display: flex;
  align-items: center;
  padding-left: 6px;
  background: #fff;
  border-radius: 2px;
  box-shadow: 0 1px 5px rgba(0, 0, 0, 0.35);
  color: #111;
`;
const ToolActive = styled.div`
  width: 40px;
  height: 40px;
  margin-left: 5px;
  display: flex;
  align-items: center;
  justify-content: center;
  background: #f3f3f3;
`;

function Graph() {
  return (
    <Canvas>
      {nodes.map((n) => <GraphNode key={n.title} n={n} />)}
      {labels.map(([t, x, y, w], i) => (
        <PortLabel key={i} $x={x - OX} $y={y - OY - 7.5}><Text w={w} size={10.8} lh={15} color="#444">{t}</Text></PortLabel>
      ))}
      <EdgeLayer width="1642" height="691" viewBox={`${OX} ${OY} 1642 691`}>
        {edges.map((d) => <path key={d} d={d} fill="none" stroke="#8a8886" strokeWidth="1.300" />)}
        {arrows.map(([x, y]) => <path key={x} d={`M${x - 3.5} ${y - 12.5}h7l-3.500 8z`} fill="#8a8886" />)}
      </EdgeLayer>
      {ports.map(([x, y, kind]) => <Port key={`${x}-${y}`} $x={x - OX} $y={y - OY} $kind={kind} />)}
      <PanelToggle>
        <Icon w={25} h={14} color="#015cda" sw={1.5}><path d="M.8.8h23.400v12.400H.8zM18.500 1v12M15.500 7H8M11 4L8 7l3 3" /></Icon>
      </PanelToggle>
      <ScrollBarY />
      <ScrollBarX />
      <CanvasTools>
        <Icon w={19} h={16} color="#333"><path d="M.8 8V.8h17.400v14.400H9M.8 8.500H9v6.700H.8zM10 8l6.500-5.500M12 2.500h4.500V6" /></Icon>
        <Text w={75} ml={10.5}>Navigator</Text>
        <ToolActive>
          <Icon w={17} h={20} color="#015cda" sw={1.2}><path d="M4.500 12V4.500c0-1.500 2.300-1.500 2.300 0V9M6.800 9V2.500c0-1.500 2.400-1.500 2.400 0V9M9.200 9V2.500c0-1.500 2.400-1.500 2.400 0V9M11.600 9V4.500c0-1.500 2.300-1.500 2.300 0V13c0 8-8 7.500-10 3.500L1 11.500C1.500 9.800 3.500 10 4.500 12" /></Icon>
        </ToolActive>
        <Icon w={20} h={16} ml={10} color="#333"><path d="M9 13H.8V.8h18.400V13H17M9 4v11.200l3-3h4.500z" /></Icon>
        <Rule $h={40} $c="#e1e1e1" $ml={14} />
        <Text w={33} size={17.3} ml={19} dy={0.5}>70%</Text>
        <Caret ml={18} />
        <Icon w={21} h={20} ml={23} color="#333"><circle cx="7.500" cy="7.500" r="6.500" /><path d="M12.300 12.300l8 7.500M4 7.500h7M7.500 4v7" /></Icon>
        <Icon w={21} h={20} ml={19} color="#333"><circle cx="7.500" cy="7.500" r="6.500" /><path d="M12.300 12.300l8 7.500M4 7.500h7" /></Icon>
        <Icon w={21} h={16} ml={19} color="#333"><path d="M.8.8h19.400v14.400H.8zM4 6V3.800h3M14 3.800h3V6M17 10v2.300h-3M7 12.300H4V10" /></Icon>
        <Icon w={20} h={20} ml={20} color="#333"><rect x=".8" y=".8" width="18.400" height="18.400" /><text x="3.200" y="14" fontSize="10.500" fill="#333" stroke="none">1:1</text></Icon>
        <Icon w={20} h={20} ml={20} color="#333">{automl}</Icon>
      </CanvasTools>
    </Canvas>
  );
}

/* ---------- taskbar ---------- */
const Taskbar = styled.footer`
  height: 50px;
  flex: none;
  display: flex;
  background: linear-gradient(90deg, #1f2121, #1f2023 30%, #232023 50%, #202023 75%, #202121);
  color: #fff;
`;
const Start = styled.div`
  width: 60px;
  display: flex;
  align-items: center;
  justify-content: center;
`;
const Search = styled.div`
  width: 360px;
  display: flex;
  align-items: center;
  padding-left: 14px;
  background: #f2f2f2;
  border: 1px solid #bdbdbd;
  color: #3a3a3a;
`;
const TaskButton = styled.div`
  width: 62.080px;
  height: 50px;
  flex: none;
  display: flex;
  align-items: center;
  justify-content: center;
  position: relative;
  ${(p) => p.$focus && css`background: #4d4e4f;`}
  &::after {
    content: "";
    display: ${(p) => (p.$open ? "block" : "none")};
    position: absolute;
    bottom: 0;
    left: ${(p) => (p.$focus ? 0 : 5.5)}px;
    right: ${(p) => (p.$focus ? 0 : 5.5)}px;
    height: 3px;
    background: #76b9ed;
  }
`;
const Tray = styled.div`
  margin-left: auto;
  display: flex;
  align-items: center;
`;
const Clock = styled.div`
  width: 76px;
  height: 50px;
  margin-left: 13px;
  display: flex;
  flex-direction: column;
  align-items: center;
  padding-top: 2px;
`;
const logo = (children) => <svg width="30" height="30" viewBox="0 0 30 30">{children}</svg>;
const apps = [
  { k: "view", art: <g fill="none" stroke="#fff" strokeWidth="1.500"><path d="M6 10h11v11H6zM6 5v2.500h11V5M6 26v-2.500h11V26M22 5v6M22 16.500V26" /><path d="M20.500 12.500h3v3h-3z" fill="#fff" stroke="none" /></g> },
  { k: "edge", art: <><defs><linearGradient id="ed" x1="0" y1="0" x2="1" y2=".4"><stop offset="0" stopColor="#2aa9e6" /><stop offset=".6" stopColor="#36c6b8" /><stop offset="1" stopColor="#6edb4e" /></linearGradient></defs><circle cx="15" cy="15" r="15" fill="#1373c8" /><path fill="url(#ed)" d="M0 14C1 5 8 0 15 0c9 0 15 6 15 12 0 5-4 8-8 8s-5-2-4-4 0-6-5-7C7 8 2 10 0 14z" /><path fill="#0c4a8c" d="M11 12c-3 7 2 14 9 14 3 0 6-1 7-3-3 5-8 7-12 7-7 0-11-8-9-13 1-3 3-4 5-5z" /><path fill="#202023" d="M18 16c-2 3 1 5 5 5 3 0 5-1 7-3v4l-3 2c-6 2-12-1-12-6 0-1 1-2 3-2z" /><circle cx="8" cy="23" r="7.500" fill="#b9b9b9" /><circle cx="8" cy="20.500" r="2.700" fill="#6c6c6c" /><path fill="#6c6c6c" d="M3 28c0-6 10-6 10 0-3 2.500-7 2.500-10 0z" /></> },
  { k: "files", open: true, art: <><path fill="#e2a20f" d="M1 4h10l2 3H1z" /><path fill="#fbd568" d="M1 7h28v19H1z" /><path fill="#4aa2e6" d="M6 27V18.500C6 17 7 16 8.500 16h13c1.500 0 2.500 1 2.500 2.500V27h-5v-4.500h-8V27z" /></> },
  { k: "store", art: <><path d="M9 7V2.500C9 1.500 9.500 1 10.500 1h9c1 0 1.500.5 1.500 1.500V7" fill="none" stroke="#32b1ec" strokeWidth="2" /><path fill="#f0f0f0" d="M1 5h28v20c0 3-1.500 4.500-4 4.500H5c-2.500 0-4-1.500-4-4.500z" /><path fill="#f25022" d="M9.500 12h5v5h-5z" /><path fill="#7fba00" d="M15.500 12h5v5h-5z" /><path fill="#00a4ef" d="M9.500 18h5v5h-5z" /><path fill="#ffb900" d="M15.500 18h5v5h-5z" /></> },
  { k: "mail", open: true, art: <><path fill="#1062ad" d="M0 11L15 1l15 10v4H0z" /><path fill="#f1f1f1" d="M3 11h24l-9 8h-6z" /><path fill="#37b3ea" d="M0 11l15 10L30 11v17H0z" /><path fill="#1e8ad8" d="M0 11v17h30z" /></> },
  { k: "chrome", open: true, focus: true, art: <><circle cx="15" cy="15" r="15" fill="#fcc934" /><path fill="#ea4335" d="M15 15L2 7.500A15 15 0 0 1 28 7.500H15z" /><path fill="#34a853" d="M2 7.500A15 15 0 0 0 15 30l6.500-11.200L15 15 8.500 18.800z" /><path fill="#fcc934" d="M15 7.500h13A15 15 0 0 1 15 30l6.500-11.200z" /><circle cx="15" cy="15" r="7.300" fill="#fff" /><circle cx="15" cy="15" r="5.700" fill="#1a73e8" /></> },
  { k: "teams", open: true, art: <><circle cx="17" cy="6" r="4.500" fill="#7b83eb" /><circle cx="25" cy="7" r="3" fill="#5059c9" /><path fill="#5059c9" d="M20 12h9v8c0 4-5 6-8 3z" /><path fill="#7b83eb" d="M9 12h14v10c0 7-11 9-13 2z" /><path fill="#4b53bc" d="M0 9h14.500v14H0z" /><text x="3.300" y="20.500" fontSize="12.500" fontWeight="700" fill="#fff">T</text><circle cx="23.500" cy="24" r="5.800" fill="#6bb700" stroke="#fff" strokeWidth="1.300" /><path d="M20.500 24l2.300 2.300 3.700-4" fill="none" stroke="#fff" strokeWidth="1.500" /></> },
  { k: "outlook", art: <><path fill="#1066b5" d="M9 1h19v20H9z" /><path fill="#32a9e7" d="M15 5h6.500v6H15z" /><path fill="#4fd0f5" d="M21.500 5H28v6h-6.500z" /><path fill="#1b86d6" d="M15 11h6.500v6H15z" /><path fill="#1490df" d="M8 17l22-2v13.500H8z" /><path fill="#35b8f1" d="M8 28.500L30 15v13.500z" /><path fill="#0f6cbd" d="M0 6h15v17H0z" /><text x="2" y="19.500" fontSize="13" fontWeight="700" fill="#fff">O</text></> },
  { k: "m365", art: <><defs><linearGradient id="m3" x1="0" y1="0" x2="0" y2="1"><stop offset="0" stopColor="#8f8fe6" /><stop offset="1" stopColor="#3c50b8" /></linearGradient></defs><path fill="url(#m3)" d="M4.500 6L13 1c2-1 5-1 6-.5L12 6.500c-1 .5-1.500 1.500-1.500 3V20c0 4-6 4-7.500 2-1-1-1.500-2-1.500-4v-7c0-2 1-4 3-5z" /><path fill="#42b8e8" d="M16 .2c1 0 2 .3 3 .8l7 4.500c2 1.300 3 3 3 5v9l-1 2.500-7.500-5V12c0-1-.5-2-1.500-2.500l-6-3.500c0-3 1-5.500 3-5.800z" /><path fill="#b27bda" d="M5 23.500c3 0 5-.5 7-1.700l7-4c1-.6 1.500-1.500 1.500-3l8 4.200c0 2-1 3.500-3 4.700l-7 4.500c-2 1.200-5 1.200-7 0z" /></> },
  { k: "pdf", open: true, art: <><path fill="#f68b1f" d="M0 0h23l7 7v23H0z" /><path fill="#ffd9a8" d="M23 0v7h7z" /><path d="M20 7.500c-3-3-11-2-11 5 0 5 8 7 9.500 1.500h-5" fill="none" stroke="#fff" strokeWidth="3.500" /><text x="8" y="28" fontSize="7.500" fontWeight="700" fill="#fff">PDF</text></> },
  { k: "excel", open: true, art: <><path fill="#21a366" d="M7 1h22v9H7z" /><path fill="#33c481" d="M18 1h11v7H18z" /><path fill="#107c41" d="M7 8h22v7H7z" /><path fill="#185c37" d="M7 15h22v13.500H7z" /><path fill="#107c41" d="M18 15h11v7H18z" /><path fill="#10733c" d="M0 7h15v15.500H0z" /><text x="3.500" y="19.500" fontSize="13" fontWeight="700" fill="#fff">X</text></> },
  { k: "notepad", open: true, art: <><path fill="#a78036" d="M24 4l4 2-3 20h-3z" /><path fill="#eef6f7" d="M10 2l15 2-3 24-6-2z" /><path fill="#58a9bc" d="M10 2l14 3-6 22L2 22z" /><path fill="#a5d4dd" d="M10 2l14 3-2 7-14-2z" /><path stroke="#444" strokeWidth="1.500" strokeDasharray="1 1" d="M10 2l14 2.500" /></> },
  { k: "settings", open: true, art: <g fill="none" stroke="#fff"><circle cx="15" cy="15" r="6.800" strokeWidth="3" /><path strokeWidth="4" d="M15 4v3.500M15 22.500V26M4 15h3.500M22.500 15H26M7.200 7.200l2.500 2.500M20.300 20.300l2.500 2.500M22.800 7.200l-2.500 2.500M9.700 20.300l-2.500 2.500" /></g> },
];

function WindowsTaskbar() {
  return (
    <Taskbar>
      <Start><Icon w={20} color="none" fill="#fff"><path d="M0 2.800L8.200 1.700v7.800H0zM9.200 1.500L20 0v9.500H9.200zM0 10.500h8.200v7.800L0 17.200zM9.200 10.500H20V20L9.200 18.500z" /></Icon></Start>
      <Search>
        <Icon w={20} color="#222" sw={1.5}><circle cx="12.800" cy="7.200" r="6.400" /><path d="M8.300 11.700L.5 19.500" /></Icon>
        <Text w={163} size={19} ml={16} lh={26}>Type here to search</Text>
      </Search>
      {apps.map((a) => <TaskButton key={a.k} $open={a.open} $focus={a.focus}>{logo(a.art)}</TaskButton>)}
      <Tray>
        <IconSlot $w={30} $h={26}>
          <svg width="30" height="26"><defs><linearGradient id="sun" x1="0" y1="0" x2="0" y2="1"><stop offset="0" stopColor="#ffd400" /><stop offset="1" stopColor="#f2700f" /></linearGradient></defs><circle cx="15" cy="12.500" r="12.500" fill="url(#sun)" /><path d="M5 4.500h9M2 9.500h14M0 15h9M12 15h14M2 20.500h20" stroke="#f6e3b5" strokeWidth="1.700" /><circle cx="22.500" cy="7.500" r="7.500" fill="#c42b1c" /><text x="19.500" y="12.200" fontSize="12" fill="#fff">1</text></svg>
        </IconSlot>
        <Text w={37} ml={10}>28°C</Text>
        <Text w={39} ml={12}>Haze</Text>
        <Icon w={17} h={10} ml={29} color="#fff" sw={1.4}><path d="M.7 9.300L8.500 1l7.800 8.300" /></Icon>
        <IconSlot $w={20} $h={14} $ml={12}><svg width="20" height="14"><path fill="#a9a9a9" d="M4 7C4 2 11-2 14.500 4c3 0 4 2 4.500 4L9 11z" /><path fill="#f4f4f4" d="M0 9.500C0 6 4 5 6 6.500l4 2 3-1.500c4-2 7 0 7 3 0 2.500-2 3.500-4 3.500H4c-2 0-4-1.500-4-4z" /></svg></IconSlot>
        <Icon w={20} h={14} ml={10} color="#fff" sw={1.3}><path d="M6 3h12.500v10H5V9M19.500 6v4M1.500 0v2.500M4.500 0v2.500M.7 2.700h4.600V5C5.300 7.500.7 7.500.7 5zM3 7v6h2" /><path fill="#fff" stroke="none" d="M7 5h6v6H7z" /></Icon>
        <Icon w={16} h={15} ml={13} color="#aaa" sw={1.4}><path d="M.8 14.500C1 6 7 .8 15.500.8M4.500 14.500C4.700 8.500 9 4.500 15.500 4.500M8.300 14.500c.2-4 2.700-6.200 7.200-6.200" /><circle cx="14" cy="13" r="2" fill="#fff" stroke="none" /></Icon>
        <Icon w={21} h={18} ml={11} color="#ddd" sw={1.3}><path d="M.8 6h3L8 2.500v13L3.800 12h-3zM11 6.500c1.200 1.500 1.200 3.500 0 5M14 4c2.500 3 2.500 7 0 10M17 1.500c4 4.500 4 10.500 0 15" /></Icon>
        <Clock>
          <Text w={60} size={15.3} lh={23}>12:02 pm</Text>
          <Text w={75} size={15.3} lh={23}>31/10/2023</Text>
        </Clock>
        <Icon w={20} h={20} ml={23} color="#fff" sw={1.4}><path d="M.8 1h18.400v14.500h-6.400L10 18.500l-2.800-3H.8z" /></Icon>
        <Rule $h={50} $c="#777" $ml={24.5} />
        <Rule $h={50} $w={4.5} $c="transparent" />
      </Tray>
    </Taskbar>
  );
}

export default function App() {
  return (
    <Screen>
      <GlobalStyle />
      <Browser />
      <StudioHeader />
      <Body>
        <Side />
        <Main>
          <MainBars />
          <Graph />
        </Main>
      </Body>
      <WindowsTaskbar />
    </Screen>
  );
}
